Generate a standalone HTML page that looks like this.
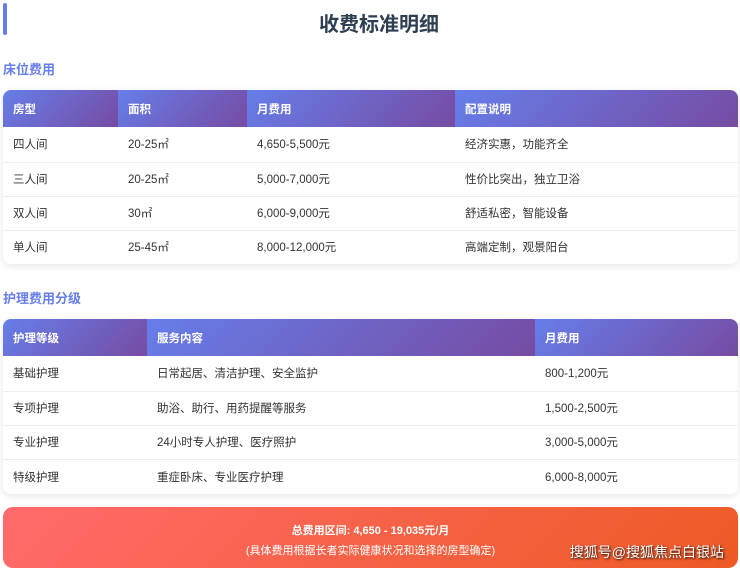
<!DOCTYPE html>
<html><head><meta charset="utf-8"><style>
*{margin:0;padding:0;box-sizing:border-box}
body{width:740px;height:571px;background:#fff;font-family:"Liberation Sans","Noto Sans CJK SC",sans-serif;position:relative;overflow:hidden;color:#333}
.bar{position:absolute;left:3px;top:3px;width:4px;height:32px;background:#667eea;border-radius:2px}
h1{position:absolute;left:18px;right:0;top:8px;text-align:center;font-size:20px;font-weight:bold;color:#2c3e50}
.sec{position:absolute;left:3px;font-size:13px;font-weight:bold;color:#667eea}
table{position:absolute;left:3px;width:735px;border-collapse:collapse;border-radius:8px;overflow:hidden;box-shadow:0 2px 8px rgba(0,0,0,.1);font-size:11.5px}
th{background:linear-gradient(135deg,#667eea,#764ba2);color:#fff;text-align:left;font-weight:bold;padding:0 10px;height:37px}
td{padding:0 10px;border-bottom:1px solid #eee;color:#333}
tr:last-child td{border-bottom:none}
.foot{position:absolute;left:3px;top:507px;width:735px;height:61px;border-radius:10px;background:linear-gradient(135deg,#ff6b6b,#ee5a24);color:#fff;text-align:center;font-size:11px}
.wm{position:absolute;right:16px;top:542px;color:#fff;font-size:14px;text-shadow:1px 1px 2px #000}
</style></head><body>
<div class="bar"></div>
<h1>收费标准明细</h1>
<div class="sec" style="top:59px">床位费用</div>
<table style="top:90px">
<tr><th style="width:115px">房型</th><th style="width:129px">面积</th><th style="width:208px">月费用</th><th>配置说明</th></tr>
<tr style="height:35px"><td>四人间</td><td>20-25㎡</td><td>4,650-5,500元</td><td>经济实惠，功能齐全</td></tr>
<tr style="height:34px"><td>三人间</td><td>20-25㎡</td><td>5,000-7,000元</td><td>性价比突出，独立卫浴</td></tr>
<tr style="height:34px"><td>双人间</td><td>30㎡</td><td>6,000-9,000元</td><td>舒适私密，智能设备</td></tr>
<tr style="height:34px"><td>单人间</td><td>25-45㎡</td><td>8,000-12,000元</td><td>高端定制，观景阳台</td></tr>
</table>
<div class="sec" style="top:288px">护理费用分级</div>
<table style="top:319px">
<tr><th style="width:144px">护理等级</th><th style="width:388px">服务内容</th><th>月费用</th></tr>
<tr style="height:35px"><td>基础护理</td><td>日常起居、清洁护理、安全监护</td><td>800-1,200元</td></tr>
<tr style="height:34px"><td>专项护理</td><td>助浴、助行、用药提醒等服务</td><td>1,500-2,500元</td></tr>
<tr style="height:34px"><td>专业护理</td><td>24小时专人护理、医疗照护</td><td>3,000-5,000元</td></tr>
<tr style="height:35px"><td>特级护理</td><td>重症卧床、专业医疗护理</td><td>6,000-8,000元</td></tr>
</table>
<div class="foot"><div style="margin-top:15px;font-weight:bold">总费用区间: 4,650 - 19,035元/月</div><div style="margin-top:4px">(具体费用根据长者实际健康状况和选择的房型确定)</div></div>
<div class="wm">搜狐号@搜狐焦点白银站</div>
</body></html>
